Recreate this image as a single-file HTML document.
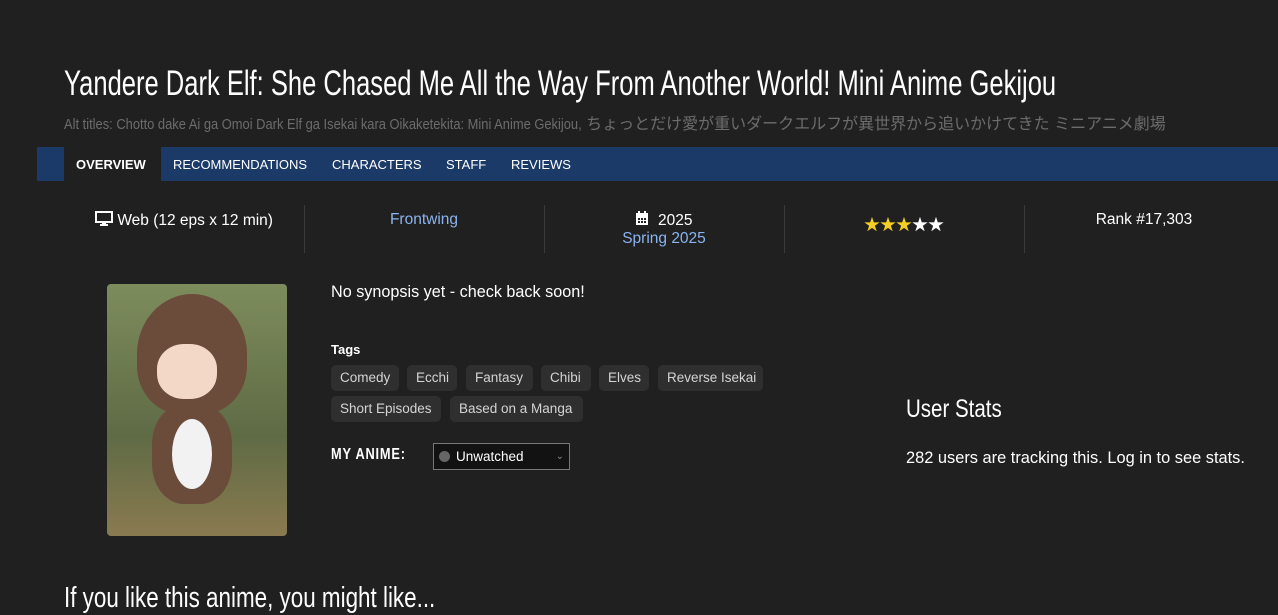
<!DOCTYPE html>
<html><head><meta charset="utf-8"><style>
body{margin:0;background:#202020;width:1278px;height:608px;overflow:hidden;font-family:"Liberation Sans","Noto Sans CJK JP",sans-serif;color:#fff;position:relative}
.sx{display:inline-block;transform-origin:left;white-space:nowrap}
h1{position:absolute;left:64px;top:64px;margin:0;font-size:35px;font-weight:normal;white-space:nowrap;transform:scaleX(0.73);transform-origin:left}
.alt{position:absolute;left:64px;top:110px;font-size:15px;color:#6c6c6c;white-space:nowrap}
.nav{position:absolute;left:37px;top:147px;width:1241px;height:34px;background:#1b3a68}
.nav span{position:absolute;top:10px;font-size:13px;color:#fff}
.nav .act{position:absolute;left:27px;top:0;width:97px;height:34px;background:#202020}
.stat{position:absolute;top:211px;font-size:15.5px;text-align:center;width:240px}
.sep{position:absolute;top:205px;width:1px;height:48px;background:#3a3a3a}
.tag{position:absolute;height:26px;background:#2f2f2f;border-radius:5px;font-size:13.5px;color:#d4d4d4;line-height:26px;padding:0 9px;box-sizing:border-box;white-space:nowrap}
</style></head><body>
<h1>Yandere Dark Elf: She Chased Me All the Way From Another World! Mini Anime Gekijou</h1>
<div class="alt"><span class="sx" style="transform:scaleX(0.86);margin-right:-84px">Alt titles: Chotto dake Ai ga Omoi Dark Elf ga Isekai kara Oikaketekita: Mini Anime Gekijou,</span> <span style="font-size:16px">ちょっとだけ愛が重いダークエルフが異世界から追いかけてきた ミニアニメ劇場</span></div>
<div class="nav"><div class="act"></div>
<span style="left:39px;font-weight:bold">OVERVIEW</span>
<span style="left:136px">RECOMMENDATIONS</span>
<span style="left:295px">CHARACTERS</span>
<span style="left:409px">STAFF</span>
<span style="left:474px">REVIEWS</span></div>
<div class="stat" style="left:64px"><svg width="18" height="15" viewBox="0 0 18 15" style="vertical-align:-1px"><rect x="1" y="1" width="16" height="10" fill="none" stroke="#fff" stroke-width="2"/><rect x="7" y="11" width="4" height="2" fill="#fff"/><rect x="5" y="13" width="8" height="2" fill="#fff"/></svg> Web (12 eps x 12 min)</div>
<div class="sep" style="left:304px"></div>
<div class="stat" style="left:304px;color:#8ab4f0">Frontwing</div>
<div class="sep" style="left:544px"></div>
<div class="stat" style="left:544px"><svg width="14" height="15" viewBox="0 0 14 15" style="vertical-align:-1px"><rect x="1" y="2" width="12" height="12" fill="#fff"/><rect x="3" y="0" width="2" height="3" fill="#fff"/><rect x="9" y="0" width="2" height="3" fill="#fff"/><g fill="#202020"><rect x="3" y="7" width="2" height="2"/><rect x="6" y="7" width="2" height="2"/><rect x="9" y="7" width="2" height="2"/><rect x="3" y="10" width="2" height="2"/><rect x="6" y="10" width="2" height="2"/><rect x="9" y="10" width="2" height="2"/></g></svg>&nbsp; 2025<br><span style="color:#8ab4f0">Spring 2025</span></div>
<div class="sep" style="left:784px"></div>
<div class="stat" style="left:784px;font-size:16px;top:211px"><span style="color:#f5d020">★★★</span><span>★★</span></div>
<div class="sep" style="left:1024px"></div>
<div class="stat" style="left:1024px">Rank #17,303</div>
<div style="position:absolute;left:107px;top:284px;width:180px;height:252px;border-radius:4px;background:linear-gradient(#7d8c5c,#5f6b45 60%,#8a7a50);overflow:hidden">
<div style="position:absolute;left:30px;top:10px;width:110px;height:120px;background:#6b4b3a;border-radius:50% 50% 40% 40%"></div>
<div style="position:absolute;left:50px;top:60px;width:60px;height:55px;background:#f3d8c8;border-radius:45%"></div>
<div style="position:absolute;left:45px;top:120px;width:80px;height:100px;background:#6b4b3a;border-radius:40%"></div>
<div style="position:absolute;left:65px;top:135px;width:40px;height:70px;background:#f2f2f2;border-radius:50%"></div></div>
<div style="position:absolute;left:331px;top:283px;font-size:16.2px">No synopsis yet - check back soon!</div>
<div style="position:absolute;left:331px;top:342px;font-size:13px;font-weight:bold">Tags</div>
<div class="tag" style="left:331px;top:365px;width:68px">Comedy</div>
<div class="tag" style="left:407px;top:365px;width:50px">Ecchi</div>
<div class="tag" style="left:466px;top:365px;width:67px">Fantasy</div>
<div class="tag" style="left:541px;top:365px;width:50px">Chibi</div>
<div class="tag" style="left:599px;top:365px;width:50px">Elves</div>
<div class="tag" style="left:658px;top:365px;width:105px">Reverse Isekai</div>
<div class="tag" style="left:331px;top:396px;width:110px">Short Episodes</div>
<div class="tag" style="left:450px;top:396px;width:133px">Based on a Manga</div>
<div style="position:absolute;left:331px;top:446px;font-size:16px;font-weight:bold;letter-spacing:1px"><span class="sx" style="transform:scaleX(0.8)">MY ANIME:</span></div>
<div style="position:absolute;left:433px;top:443px;width:135px;height:25px;border:1px solid #777;background:#121212;font-size:13.5px;line-height:25px">
<span style="display:inline-block;width:11px;height:11px;border-radius:50%;background:#666;margin:0 6px 0 5px;vertical-align:-1px"></span>Unwatched<span style="position:absolute;right:5px;color:#888;font-size:10px">⌄</span></div>
<div style="position:absolute;left:906px;top:395px;font-size:25px"><span class="sx" style="transform:scaleX(0.82)">User Stats</span></div>
<div style="position:absolute;left:906px;top:449px;font-size:16.4px">282 users are tracking this. Log in to see stats.</div>
<div style="position:absolute;left:64px;top:582px;font-size:29px"><span class="sx" style="transform:scaleX(0.773)">If you like this anime, you might like...</span></div>
</body></html>
